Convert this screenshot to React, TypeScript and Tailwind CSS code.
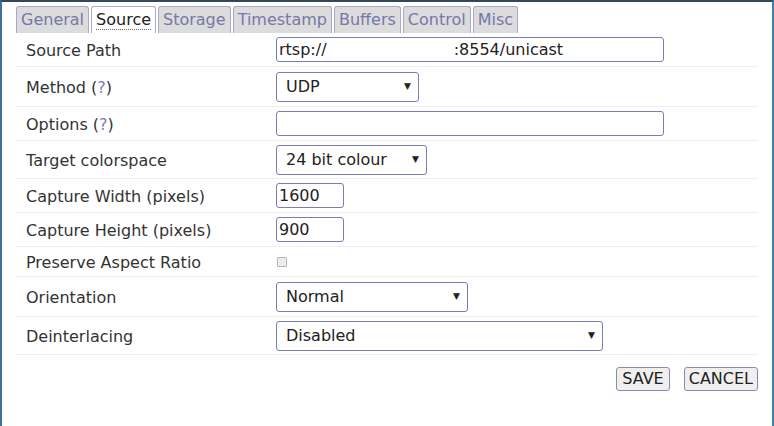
import React from 'react';

const TABS = ['General', 'Source', 'Storage', 'Timestamp', 'Buffers', 'Control', 'Misc'];

function Select({ value, w }: { value: string; w: string }) {
  return (
    <div className={`${w} h-[30px] border border-[#7b7bb5] rounded-[3px] bg-white flex items-center justify-between pl-[9px] pr-[7px] text-[16px] text-[#222]`}>
      <span>{value}</span>
      <span className="text-[9px] text-[#222]">▼</span>
    </div>
  );
}

function Input({ value, w }: { value?: string; w: string }) {
  return (
    <div className={`${w} h-[25px] border border-[#7b7bb5] rounded-[3px] bg-white flex items-center px-[2px] text-[16px] text-[#222] whitespace-pre`}>
      {value}
    </div>
  );
}

function Help() {
  return (
    <>
      {' ('}
      <span className="text-[#7a7ab0]">?</span>
      {')'}
    </>
  );
}

const ROWS: { label: React.ReactNode; h: string; field: React.ReactNode }[] = [
  { label: 'Source Path', h: 'h-[34px]', field: <Input w="w-[388px]" value={'rtsp://                         :8554/unicast'} /> },
  { label: <>Method<Help /></>, h: 'h-[40px]', field: <Select w="w-[143px]" value="UDP" /> },
  { label: <>Options<Help /></>, h: 'h-[34px]', field: <Input w="w-[388px]" /> },
  { label: 'Target colorspace', h: 'h-[38px]', field: <Select w="w-[151px]" value="24 bit colour" /> },
  { label: 'Capture Width (pixels)', h: 'h-[34px]', field: <Input w="w-[68px]" value="1600" /> },
  { label: 'Capture Height (pixels)', h: 'h-[34px]', field: <Input w="w-[68px]" value="900" /> },
  {
    label: 'Preserve Aspect Ratio',
    h: 'h-[30px]',
    field: <div className="ml-[1px] w-[10px] h-[10px] border border-[#b5b5b5] bg-[#ececec] rounded-[1px]" />,
  },
  { label: 'Orientation', h: 'h-[40px]', field: <Select w="w-[192px]" value="Normal" /> },
  { label: 'Deinterlacing', h: 'h-[38px]', field: <Select w="w-[327px]" value="Disabled" /> },
];

export default function App() {
  return (
    <div
      className="w-[774px] h-[426px] bg-white border-t-2 border-t-[#2e4a5c] border-l-2 border-l-[#3a7396] border-r-2 border-r-[#3d84a8] overflow-hidden"
      style={{ fontFamily: '"DejaVu Sans", Verdana, sans-serif' }}
    >
      <div className="pl-[14px] pr-[14px]">
        {/* tabs */}
        <div className="flex gap-[2px] pt-[4px] h-[31px] items-end">
          {TABS.map((t) => {
            const active = t === 'Source';
            return (
              <div
                key={t}
                className={`h-[27px] px-[4px] border border-[#a8a8c8] border-b-0 rounded-t-[3px] text-[16px] leading-[26px] ${
                  active ? 'bg-white text-[#222]' : 'bg-[#dcdcdc] text-[#7777a8]'
                }`}
              >
                <span className={active ? 'border-b border-dotted border-[#666]' : ''}>{t}</span>
              </div>
            );
          })}
        </div>

        {/* form rows */}
        <div className="w-[742px]">
          {ROWS.map((r, i) => (
            <div key={i} className={`${r.h} flex items-center border-b border-[#eeeeee] text-[16px] text-[#333]`}>
              <div className="w-[260px] pl-[10px] pt-[2px]">{r.label}</div>
              <div className="flex items-center">{r.field}</div>
            </div>
          ))}
        </div>

        {/* actions */}
        <div className="w-[742px] flex justify-end gap-[14px] pt-[12px]">
          <button className="h-[24px] px-[5px] bg-[#efefef] border border-[#8a8ab8] rounded-[3px] text-[16px] text-[#222] leading-none">
            SAVE
          </button>
          <button className="h-[24px] px-[4px] bg-[#efefef] border border-[#8a8ab8] rounded-[3px] text-[16px] text-[#222] leading-none">
            CANCEL
          </button>
        </div>
      </div>
    </div>
  );
}
